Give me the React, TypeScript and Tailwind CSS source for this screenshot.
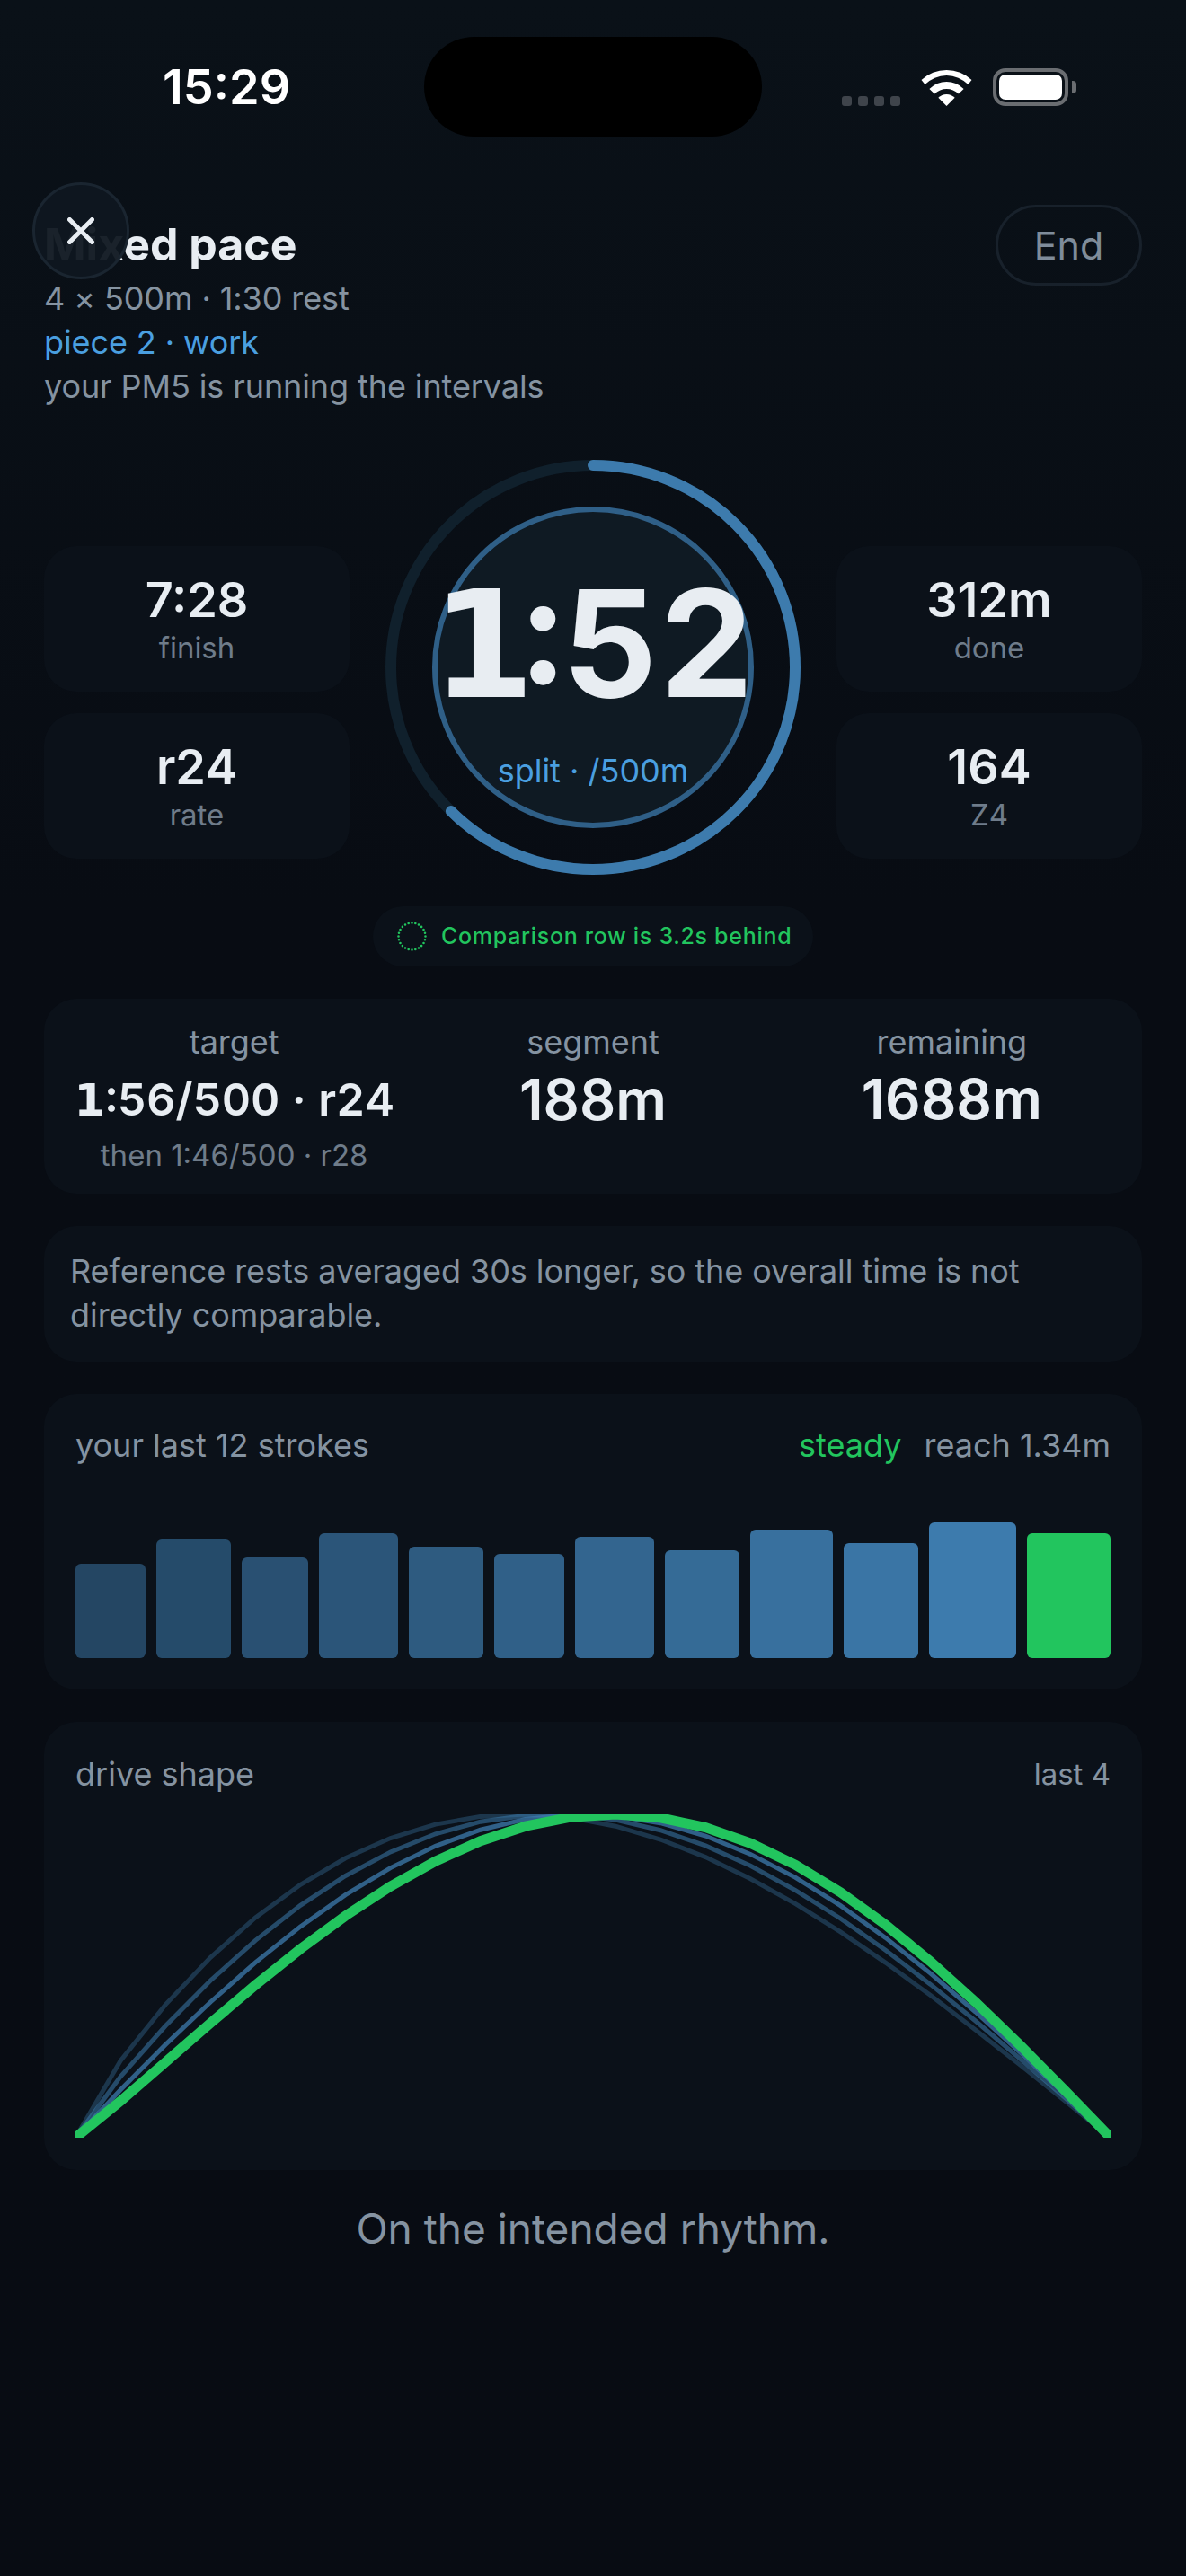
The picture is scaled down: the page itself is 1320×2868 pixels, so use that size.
import React from "react";

const bars = [
  { w: 78, h: 105 },
  { w: 83, h: 132 },
  { w: 74, h: 112 },
  { w: 88, h: 139 },
  { w: 83, h: 124 },
  { w: 78, h: 116 },
  { w: 88, h: 135 },
  { w: 83, h: 120 },
  { w: 92, h: 143 },
  { w: 83, h: 128 },
  { w: 97, h: 151 },
];

// drive curve: sin(pi * t^k), 24 samples, drawn in a 1152x360 box
function curve(k: number) {
  const pts: string[] = [];
  for (let i = 0; i < 24; i++) {
    const t = i / 23;
    const y = 360 - 360 * Math.sin(Math.PI * Math.pow(t, k));
    pts.push(`${(t * 1152).toFixed(1)},${y.toFixed(1)}`);
  }
  return pts.join(" ");
}

function StatCard({ value, label }: { value: string; label: string }) {
  return (
    <div className="h-[162px] rounded-[36px] bg-[#0b1119] pt-[30px] flex flex-col items-center">
      <div className="text-[54px] leading-[60px] font-semibold text-[#e8edf2]">{value}</div>
      <div className="text-[33px] leading-[46px] text-[#6f7c8a]">{label}</div>
    </div>
  );
}

function StatusBar() {
  return (
    <div className="h-[111px] flex items-center">
      <div className="w-[472px] pl-[181px] text-[54px] leading-[111px] font-semibold text-white">15:29</div>
      <div className="w-[376px] h-[111px] rounded-full bg-black" />
      <div className="ml-[89px] h-[42px] flex items-end">
        <div className="flex gap-[7px]">
          <div className="w-[11px] h-[11px] rounded-[3px] bg-[#3f444b]" />
          <div className="w-[11px] h-[11px] rounded-[3px] bg-[#3f444b]" />
          <div className="w-[11px] h-[11px] rounded-[3px] bg-[#3f444b]" />
          <div className="w-[11px] h-[11px] rounded-[3px] bg-[#3f444b]" />
        </div>
        <svg width="57" height="42" viewBox="0 0 57 42" className="ml-[23px] overflow-visible" fill="#fff">
          <path d="M0.5 13 A41 41 0 0 1 56.5 13 L52.5 18 A34 34 0 0 0 4.5 18 Z" />
          <path d="M9.4 22.9 A27 27 0 0 1 47.6 22.9 L41.9 28.6 A19 19 0 0 0 15.1 28.6 Z" />
          <path d="M19.3 32.8 A13 13 0 0 1 37.7 32.8 L28.5 42 Z" />
        </svg>
        <div className="ml-[23px] w-[84px] h-[42px] rounded-[14px] border-[4px] border-[#6a6d71] p-[3px]">
          <div className="w-full h-full rounded-[7px] bg-white" />
        </div>
        <div className="ml-[4px] mb-[14px] w-[5px] h-[14px] rounded-r-[4px] bg-[#6a6d71]" />
      </div>
    </div>
  );
}

function Hero() {
  return (
    <div className="relative w-[462px] h-[462px]">
      <svg width="462" height="462" viewBox="0 0 462 462" fill="none">
        <circle cx="231" cy="231" r="225" stroke="#10202c" strokeWidth="12" />
        <circle
          cx="231"
          cy="231"
          r="225"
          stroke="#3d7bad"
          strokeWidth="12"
          strokeLinecap="round"
          pathLength="1000"
          strokeDasharray="624 1000"
          transform="rotate(-90 231 231)"
        />
      </svg>
      <div className="absolute left-[52px] top-[52px] w-[358px] h-[358px] rounded-full bg-[#0f1a23] border-[6px] border-[#2f5f87] flex flex-col items-center">
        <div className="mt-[64px] text-[165px] leading-[165px] font-bold whitespace-nowrap text-[#e8edf2] tabular-nums">
          <span className="font-['DejaVu_Sans'] tracking-[-13px]">1</span>:52
        </div>
        <div className="mt-[32px] text-[36px] leading-[48px] text-[#4a9fe0]">split · /500m</div>
      </div>
    </div>
  );
}

export default function App() {
  return (
    <div className="relative w-[1320px] min-h-[2868px] pt-[41px] font-[Inter,sans-serif] bg-linear-to-b from-[#0a1118] to-[#080c13] to-[35%]">
      <StatusBar />

      {/* Header */}
      <div className="mt-[76px] px-[49px] flex justify-between items-start">
        <div>
          <div className="mt-[8px] text-[50px] leading-[72px] font-bold text-[#e8edf2]">Mixed pace</div>
          <div className="text-[36px] leading-[49px] tracking-[-0.1px] text-[#8593a1]">4 × 500m · 1:30 rest</div>
          <div className="text-[36px] leading-[49px] tracking-[-0.1px] text-[#4a9fe0]">piece 2 · work</div>
          <div className="text-[36px] leading-[49px] tracking-[-0.1px] text-[#8593a1]">your PM5 is running the intervals</div>
        </div>
        <div className="w-[163px] h-[90px] rounded-full border-[3px] border-[#18212b] flex items-center justify-center text-[43px] text-[#7f8c9a]">
          End
        </div>
      </div>

      <button className="absolute left-[36px] top-[203px] w-[108px] h-[108px] rounded-full bg-[#0f1720]/95 border-[3px] border-[#1a2530] flex items-center justify-center">
        <svg width="30" height="30" viewBox="0 0 30 30" stroke="#e8edf2" strokeWidth="5" strokeLinecap="round">
          <path d="M2.5 2.5 L27.5 27.5 M27.5 2.5 L2.5 27.5" />
        </svg>
      </button>

      {/* Hero row */}
      <div className="mt-[57px] px-[49px] flex justify-between">
        <div className="w-[340px] mt-[96px] flex flex-col gap-[24px]">
          <StatCard value="7:28" label="finish" />
          <StatCard value="r24" label="rate" />
        </div>
        <Hero />
        <div className="w-[340px] mt-[96px] flex flex-col gap-[24px]">
          <StatCard value="312m" label="done" />
          <StatCard value="164" label="Z4" />
        </div>
      </div>

      {/* Comparison pill */}
      <div className="mt-[35px] flex justify-center">
        <div className="w-[490px] h-[67px] rounded-full bg-[#0b1119] pl-[27px] flex items-center">
          <svg width="33" height="33" viewBox="0 0 33 33" fill="none">
            <circle
              cx="16.5"
              cy="16.5"
              r="15"
              stroke="#22c55e"
              strokeWidth="2.6"
              strokeLinecap="round"
              pathLength="24"
              strokeDasharray="0 1"
            />
          </svg>
          <div className="ml-[16px] text-[25px] font-medium tracking-[0.7px] whitespace-nowrap text-[#22c55e]">
            Comparison row is 3.2s behind
          </div>
        </div>
      </div>

      <div className="mt-[36px] px-[49px] flex flex-col gap-[36px]">
        {/* Target */}
        <div className="h-[217px] rounded-[36px] bg-[#0b1119] px-[12px] pt-[24px] grid grid-cols-3">
          <div className="flex flex-col items-center">
            <div className="text-[36px] leading-[48px] text-[#8593a1]">target</div>
            <div className="mt-[7px] text-[50px] leading-[66px] font-semibold whitespace-nowrap text-[#e8edf2] tabular-nums">
              <span className="font-['DejaVu_Sans']">1</span>:56/500 · r24
            </div>
            <div className="mt-[6px] text-[33px] leading-[44px] text-[#6f7c8a]">then 1:46/500 · r28</div>
          </div>
          <div className="flex flex-col items-center">
            <div className="text-[36px] leading-[48px] text-[#8593a1]">segment</div>
            <div className="mt-[7px] text-[63px] leading-[66px] font-semibold text-[#e8edf2]">188m</div>
          </div>
          <div className="flex flex-col items-center">
            <div className="text-[36px] leading-[48px] text-[#8593a1]">remaining</div>
            <div className="mt-[7px] text-[62px] leading-[66px] font-semibold text-[#e8edf2]">1688m</div>
          </div>
        </div>

        {/* Note */}
        <div className="h-[151px] rounded-[36px] bg-[#0b1119] pl-[29px] pr-[60px] pt-[26px] text-[36px] leading-[49px] tracking-[-0.06px] text-[#8593a1]">
          Reference rests averaged 30s longer, so the overall time is not directly comparable.
        </div>

        {/* Strokes */}
        <div className="h-[329px] rounded-[36px] bg-[#0b1119] px-[35px] pt-[33px]">
          <div className="flex justify-between text-[36px] leading-[48px] text-[#8593a1]">
            <div>your last 12 strokes</div>
            <div className="flex gap-[25px]">
              <span className="text-[#22c55e]">steady</span>
              <span>reach 1.34m</span>
            </div>
          </div>
          <div className="mt-[53px] h-[160px] flex items-end gap-[12px]">
            {bars.map((b, i) => (
              <div
                key={i}
                className="rounded-[6px] bg-[#3d7bad]"
                style={{ width: b.w, height: b.h, opacity: 0.5 + i * 0.05 }}
              />
            ))}
            <div className="w-[93px] h-[139px] rounded-[6px] bg-[#22c55e]" />
          </div>
        </div>

        {/* Drive shape */}
        <div className="h-[499px] rounded-[36px] bg-[#0b1119] px-[35px] pt-[34px]">
          <div className="flex justify-between text-[36px] leading-[48px] text-[#8593a1]">
            <div>drive shape</div>
            <div className="text-[33px]">last 4</div>
          </div>
          <svg width="1152" height="360" viewBox="0 0 1152 360" fill="none" className="mt-[21px]">
            <polyline points={curve(0.82)} stroke="#3d7bad" strokeOpacity="0.35" strokeWidth="5" />
            <polyline points={curve(0.895)} stroke="#3d7bad" strokeOpacity="0.55" strokeWidth="5" />
            <polyline points={curve(0.973)} stroke="#3d7bad" strokeOpacity="0.75" strokeWidth="5" />
            <polyline points={curve(1.06)} stroke="#22c55e" strokeWidth="11" />
          </svg>
        </div>
      </div>

      <div className="mt-[33px] text-center text-[46px] leading-[64px] text-[#8593a1]">On the intended rhythm.</div>
    </div>
  );
}
